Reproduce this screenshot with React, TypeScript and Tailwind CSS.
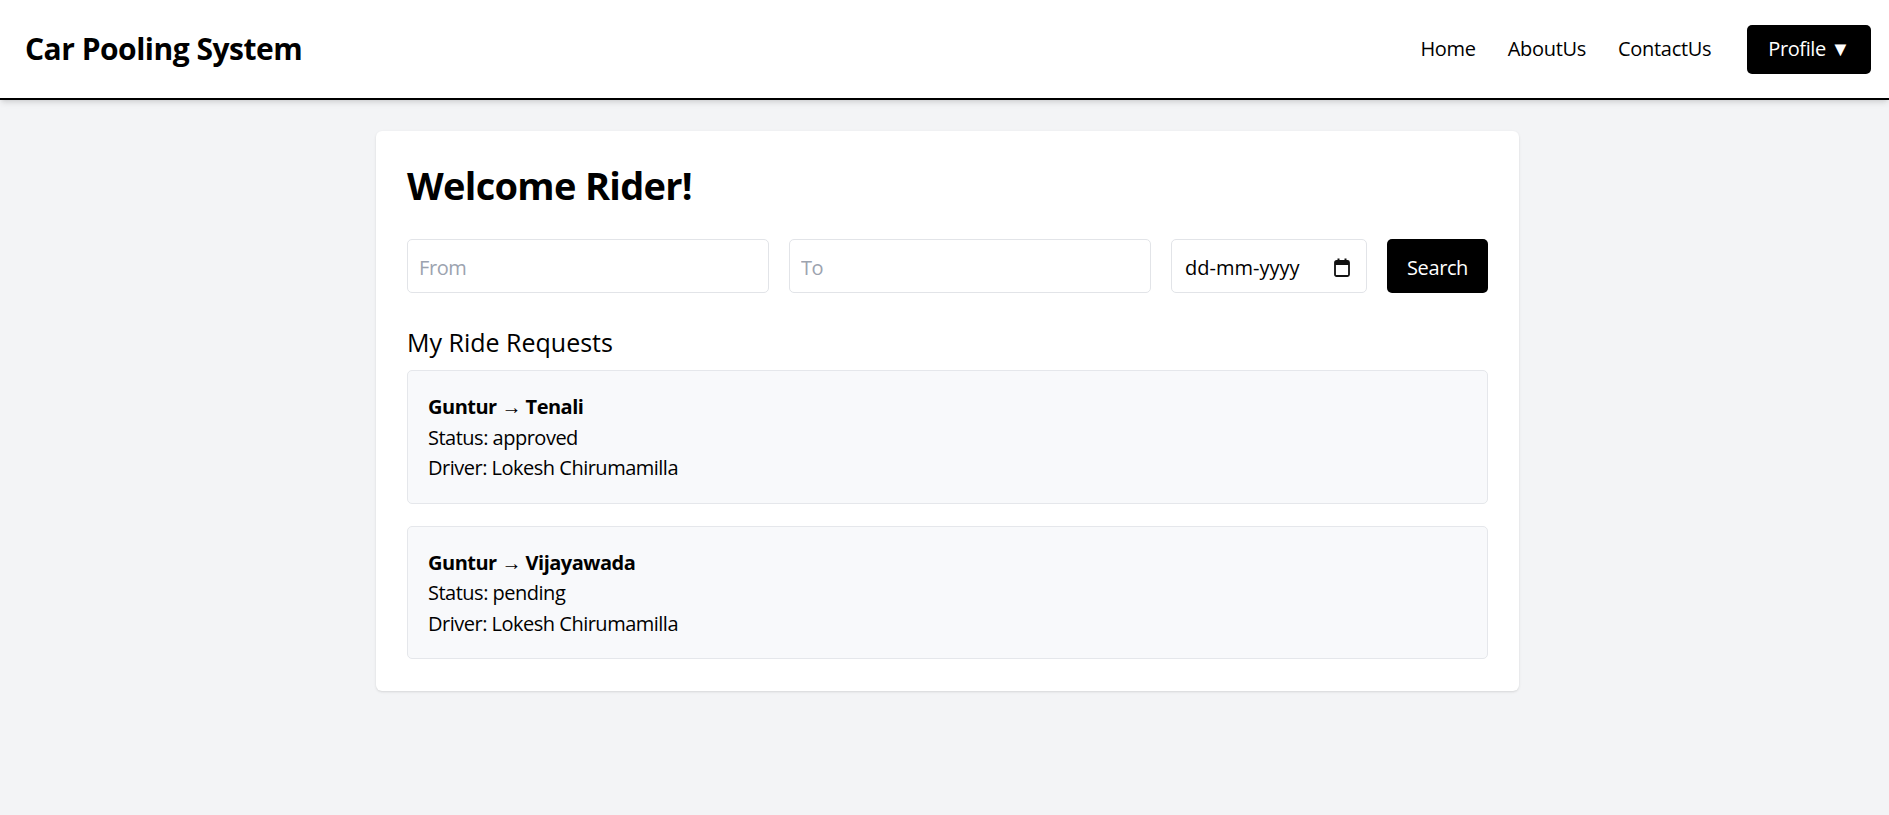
import { useState } from 'react'

type RideRequest = {
  from: string
  to: string
  status: string
  driver: string
}

const requests: RideRequest[] = [
  { from: 'Guntur', to: 'Tenali', status: 'approved', driver: 'Lokesh Chirumamilla' },
  { from: 'Guntur', to: 'Vijayawada', status: 'pending', driver: 'Lokesh Chirumamilla' },
]

function CalendarIcon() {
  return (
    <svg width="16" height="19" viewBox="0 0 16 19" fill="none" className="shrink-0">
      <rect x="1" y="3" width="14" height="15" rx="1.5" stroke="#111" strokeWidth="1.8" />
      <rect x="1" y="3" width="14" height="4" fill="#111" />
      <rect x="3.5" y="0.5" width="2" height="4" fill="#111" />
      <rect x="10.5" y="0.5" width="2" height="4" fill="#111" />
    </svg>
  )
}

export default function App() {
  const [from, setFrom] = useState('')
  const [to, setTo] = useState('')

  return (
    <div className="min-h-screen bg-[#f3f4f6] font-['Open_Sans',sans-serif] text-black">
      {/* Navbar */}
      <header className="h-[100px] bg-white border-b-2 border-black shadow-md flex items-center justify-between pl-[25px] pr-[18px]">
        <h1 className="text-[30px] font-bold leading-none tracking-[-0.5px]">Car Pooling System</h1>
        <nav className="flex items-center text-[20px] tracking-[-0.3px]">
          <a href="#" className="mr-[32px]">Home</a>
          <a href="#" className="mr-[32px]">AboutUs</a>
          <a href="#" className="mr-[36px]">ContactUs</a>
          <button className="h-[49px] px-[21px] rounded-[5px] bg-black text-white text-[20px] tracking-[-0.4px]">
            Profile ▼
          </button>
        </nav>
      </header>

      {/* Dashboard */}
      <main className="pl-[6px] pt-[31px]">
        <div className="w-[1143px] mx-auto bg-white rounded-[6px] shadow-sm px-[31px] pt-[31px] pb-[32px]">
          <h2 className="text-[38px] leading-[46px] font-bold tracking-[-0.7px] mb-[31px]">Welcome Rider!</h2>

          <div className="flex gap-[20px] text-[20px] tracking-[-0.4px]">
            <input
              value={from}
              onChange={(e) => setFrom(e.target.value)}
              placeholder="From"
              className="flex-1 min-w-0 h-[54px] px-[11px] pt-[3px] border border-[#e2e4e8] rounded-[5px] placeholder:text-[#9ca3af] outline-none"
            />
            <input
              value={to}
              onChange={(e) => setTo(e.target.value)}
              placeholder="To"
              className="flex-1 min-w-0 h-[54px] px-[11px] pt-[3px] border border-[#e2e4e8] rounded-[5px] placeholder:text-[#9ca3af] outline-none"
            />
            <div className="w-[196px] h-[54px] flex items-center justify-between pl-[13px] pr-[16px] pt-[3px] border border-[#e2e4e8] rounded-[5px]">
              <span className="tracking-normal">dd-mm-yyyy</span>
              <CalendarIcon />
            </div>
            <button className="w-[101px] h-[54px] pt-[3px] rounded-[5px] bg-black text-white">Search</button>
          </div>

          <h3 className="text-[25px] leading-[30px] mt-[34px] mb-[13px]">My Ride Requests</h3>

          <div className="flex flex-col gap-[22px]">
            {requests.map((r, i) => (
              <div key={i} className="border border-[#e5e7eb] rounded-[5px] bg-[#f8f9fb] px-[20px] pt-[21px] pb-[19px] text-[20px] leading-[30.5px] tracking-[-0.5px]">
                <p className="font-bold">
                  {r.from} → {r.to}
                </p>
                <p>Status: {r.status}</p>
                <p>Driver: {r.driver}</p>
              </div>
            ))}
          </div>
        </div>
      </main>
    </div>
  )
}
